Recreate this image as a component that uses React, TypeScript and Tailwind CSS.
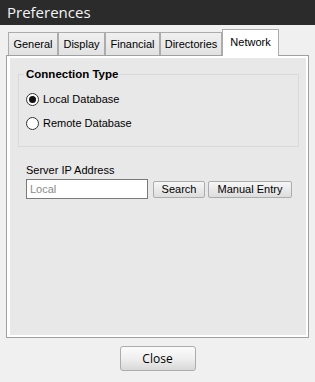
import React from "react";

const tabs = [
  { label: "General", w: "w-[50px]" },
  { label: "Display", w: "w-[47px]" },
  { label: "Financial", w: "w-[55px]" },
  { label: "Directories", w: "w-[62px]" },
];

function Radio({ checked, label }: { checked?: boolean; label: string }) {
  return (
    <div className="flex items-center h-[16px] gap-[4px]">
      <span className="w-[13px] h-[13px] rounded-full border border-[#333333] bg-white flex items-center justify-center">
        {checked && <span className="w-[7px] h-[7px] rounded-full bg-[#111111]" />}
      </span>
      <span className="text-[11px] text-black">{label}</span>
    </div>
  );
}

export default function App() {
  return (
    <div className="w-[315px] h-[382px] bg-[#f0f0f0] flex flex-col font-['Liberation_Sans',Arial,sans-serif] text-[11px] text-black">
      <div className="h-[25px] shrink-0 bg-[#2b2b2b] text-[#f4f4f4] pl-[7px] flex items-center text-[15px] font-['Open_Sans',sans-serif]">
        Preferences
      </div>
      <div className="h-[30px] shrink-0 flex items-end pl-[8px] relative z-10">
        {tabs.map((t) => (
          <div
            key={t.label}
            className={`${t.w} h-[23px] flex items-center justify-center border border-b-0 border-[#acacac] bg-gradient-to-b from-[#f0f0f0] to-[#e2e2e2]`}
          >
            {t.label}
          </div>
        ))}
        <div className="w-[57px] h-[27px] -mb-px flex items-center justify-center border border-b-0 border-[#acacac] bg-white pb-[2px]">
          Network
        </div>
      </div>
      <div className="mx-[6px] h-[283px] shrink-0 border border-[#a0a0a0] bg-white pt-[2px] pl-[3px] pr-[2px] pb-[2px]">
        <div className="h-full bg-[#e8e8e8] flex flex-col">
          <div className="mt-[16px] ml-[8px] mr-[7px] h-[73px] border border-[#d9d9d9] relative pt-[16px] pl-[7px] flex flex-col gap-[8px]">
            <span className="absolute left-[5px] -top-[9px] px-[2px] bg-[#e8e8e8] font-bold text-[11.5px] leading-[16px]">
              Connection Type
            </span>
            <Radio checked label="Local Database" />
            <Radio label="Remote Database" />
          </div>
          <div className="ml-[16px] mt-[15px] h-[16px] flex items-center">Server IP Address</div>
          <div className="ml-[16px] mt-[1px] flex items-center">
            <div className="w-[122px] h-[20px] border border-[#7a7a7a] bg-white flex items-center pl-[3px] text-[#8a8a8a]">
              Local
            </div>
            <button className="ml-[5px] w-[52px] h-[17px] border border-[#acacac] rounded-[2px] bg-gradient-to-b from-[#f6f6f6] to-[#dddddd] flex items-center justify-center text-[11px]">
              Search
            </button>
            <button className="ml-[3px] w-[84px] h-[17px] border border-[#acacac] rounded-[2px] bg-gradient-to-b from-[#f6f6f6] to-[#dddddd] flex items-center justify-center text-[11px]">
              Manual Entry
            </button>
          </div>
        </div>
      </div>
      <div className="flex justify-center mt-[8px]">
        <button className="w-[76px] h-[25px] border border-[#acacac] rounded-[3px] bg-gradient-to-b from-[#fbfbfb] via-[#efefef] to-[#d8d8d8] flex items-center justify-center text-[12px] font-['Open_Sans',sans-serif]">
          Close
        </button>
      </div>
    </div>
  );
}
